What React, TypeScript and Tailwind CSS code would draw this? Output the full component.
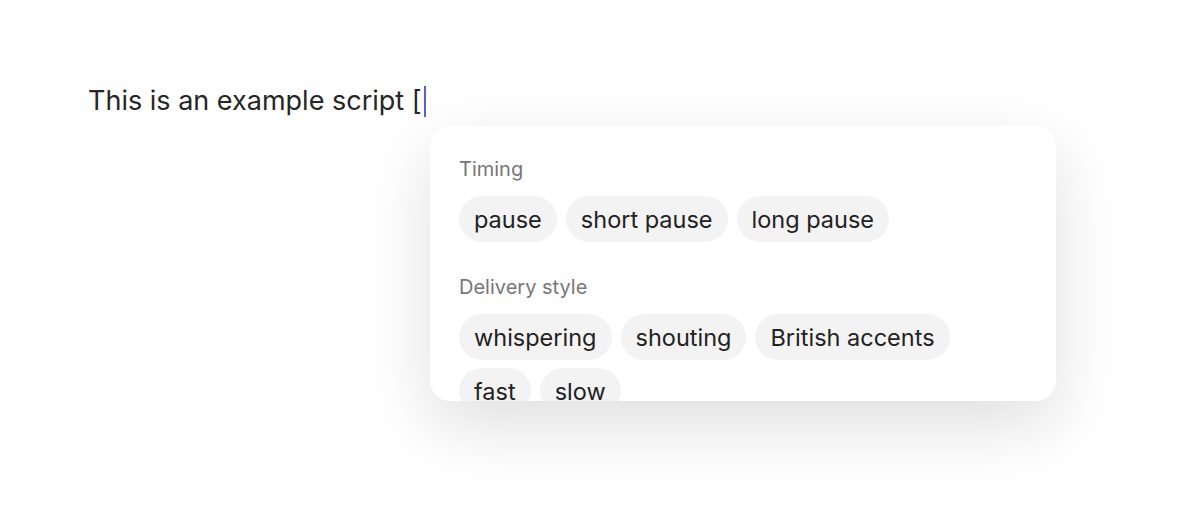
const groups = [
  { title: 'Timing', items: ['pause', 'short pause', 'long pause'] },
  { title: 'Delivery style', items: ['whispering', 'shouting', 'British accents', 'fast', 'slow'] },
]

export default function App() {
  return (
    <div className="h-[519px] w-[1200px] overflow-hidden bg-white font-['Inter',sans-serif] text-[#262626]">
      <div className="pl-[88px] pt-[82px]">
        <div className="flex items-center text-[27px] leading-[38px]">
          <span>This is an example script [</span>
          <span className="ml-[2px] h-[31px] w-[2.5px] bg-[#5b5fd6]" />
        </div>
        <div className="ml-[342px] mt-[6px] h-[275px] w-[626px] overflow-hidden rounded-[20px] bg-white px-[29px] shadow-[0_24px_70px_rgba(0,0,0,0.13)]">
          <div className="pt-[30px]">
            {groups.map((g, i) => (
              <div key={g.title} className={i > 0 ? 'mt-[32px]' : ''}>
                <div className="text-[20px] leading-[26px] text-[#777]">{g.title}</div>
                <div className="mt-[14px] flex flex-wrap gap-x-[9px] gap-y-[8px]">
                  {g.items.map((it) => (
                    <span
                      key={it}
                      className="rounded-full bg-[#f3f3f3] px-[15px] pt-[2px] text-[23.5px] leading-[44px] text-[#222]"
                    >
                      {it}
                    </span>
                  ))}
                </div>
              </div>
            ))}
          </div>
        </div>
      </div>
    </div>
  )
}
